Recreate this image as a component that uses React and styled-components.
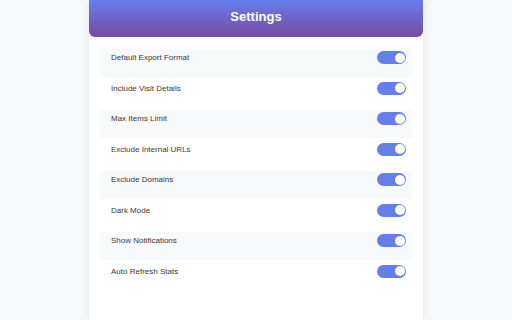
import React from "react";
import styled, { createGlobalStyle } from "styled-components";

const GlobalStyle = createGlobalStyle`
  html, body {
    margin: 0;
    padding: 0;
    background: #f7f8fa;
    font-family: "Liberation Sans", Arial, sans-serif;
  }
`;

const Page = styled.div`
  display: flex;
  justify-content: center;
  height: 320px;
  overflow: hidden;
`;

const Panel = styled.div`
  width: 334px;
  height: 100%;
  background: #fff;
  box-shadow: 0 0 10px rgba(0, 0, 0, 0.08);
  display: flex;
  flex-direction: column;
`;

const Header = styled.header`
  height: 37px;
  display: flex;
  align-items: center;
  justify-content: center;
  background: linear-gradient(180deg, #667eea 0%, #764ba2 100%);
  border-radius: 0 0 6px 6px;
  color: #fff;
  font-size: 13px;
  font-weight: 700;
  padding-bottom: 4px;
  box-sizing: border-box;
`;

const List = styled.div`
  display: flex;
  flex-direction: column;
  gap: 3px;
  padding: 12px 11px 0;
`;

const Row = styled.div`
  height: 27.5px;
  box-sizing: border-box;
  display: flex;
  align-items: flex-start;
  justify-content: space-between;
  padding: 2px 6px 0 11px;
  background: ${(p) => (p.$shaded ? "#f8f9fa" : "#fff")};
`;

const Label = styled.span`
  font-size: 8px;
  color: #3a3a3a;
  line-height: 13px;
`;

const Toggle = styled.span`
  position: relative;
  width: 29px;
  height: 13px;
  border-radius: 7px;
  background: ${(p) => (p.$on ? "#667eea" : "#ccc")};
  flex-shrink: 0;

  &::after {
    content: "";
    position: absolute;
    top: 1.5px;
    left: ${(p) => (p.$on ? "17.5px" : "1.5px")};
    width: 10px;
    height: 10px;
    border-radius: 50%;
    background: #fff;
  }
`;

const settings = [
  "Default Export Format",
  "Include Visit Details",
  "Max Items Limit",
  "Exclude Internal URLs",
  "Exclude Domains",
  "Dark Mode",
  "Show Notifications",
  "Auto Refresh Stats",
];

export default function App() {
  return (
    <>
      <GlobalStyle />
      <Page>
        <Panel>
          <Header>Settings</Header>
          <List>
            {settings.map((label, i) => (
              <Row key={label} $shaded={i % 2 === 0}>
                <Label>{label}</Label>
                <Toggle $on />
              </Row>
            ))}
          </List>
        </Panel>
      </Page>
    </>
  );
}
